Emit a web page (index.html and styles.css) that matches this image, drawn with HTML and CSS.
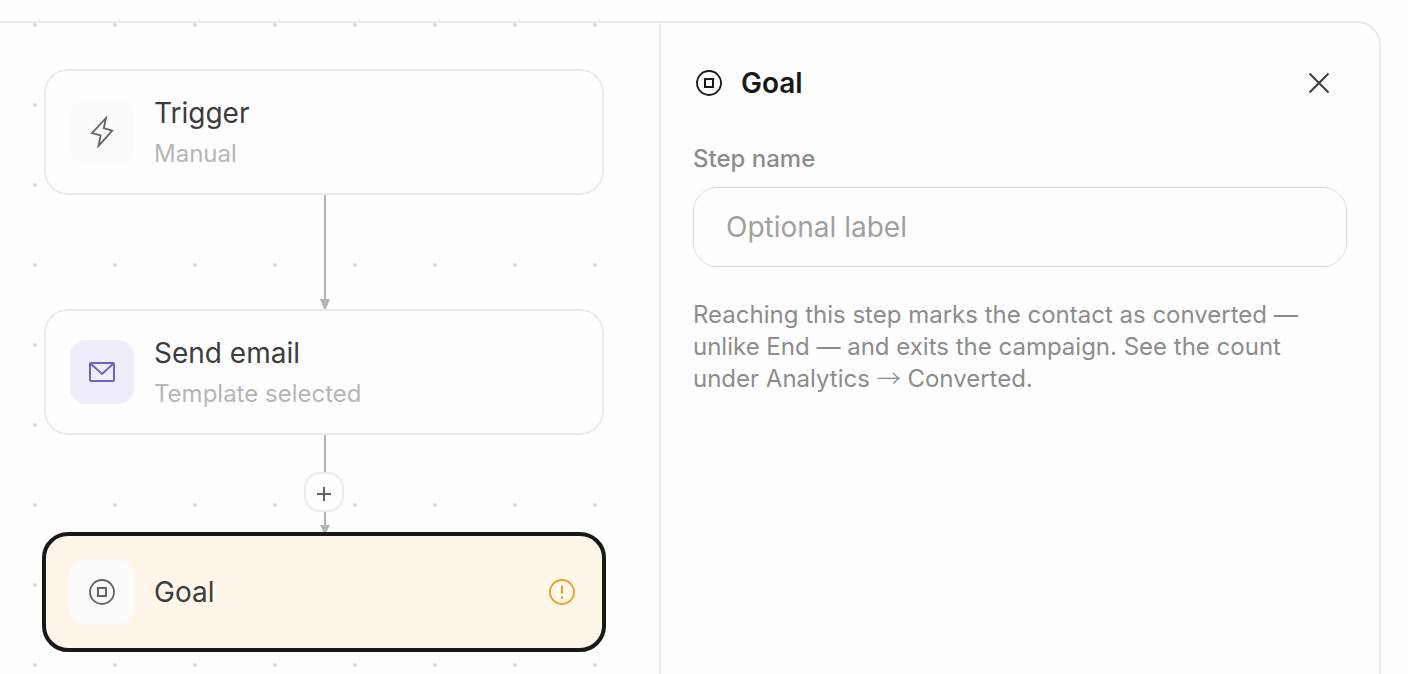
FILE: index.html
```html
<!DOCTYPE html>
<html lang="en">
<head>
<meta charset="utf-8">
<title>Campaign editor</title>
<link rel="stylesheet" href="styles.css">
</head>
<body>
<div class="page">
  <div class="shell">
    <main class="canvas">
      <article class="node">
        <span class="node-icon">
          <svg class="icon" viewBox="0 0 32 32" aria-hidden="true"><path d="M20 2 6 17.100l8.600 2.400L12.500 30 26.200 14.700l-8.400-2.500z"/></svg>
        </span>
        <div class="node-text node-text-double">
          <h3 class="node-title">Trigger</h3>
          <p class="node-note">Manual</p>
        </div>
      </article>

      <div class="connector">
        <svg width="40" height="114" viewBox="0 0 40 114" aria-hidden="true"><path class="wire" d="M21 0v114"/><path class="tip" d="M16 104h10l-4 10h-2z"/></svg>
      </div>

      <article class="node">
        <span class="node-icon node-icon-email">
          <svg class="icon" viewBox="0 0 32 32" aria-hidden="true"><rect class="bold" x="4" y="7" width="24" height="18" rx="1"/><path class="bold" d="M4.500 7.500 16 18 27.500 7.500"/></svg>
        </span>
        <div class="node-text node-text-double">
          <h3 class="node-title">Send email</h3>
          <p class="node-note">Template selected</p>
        </div>
      </article>

      <div class="connector">
        <svg width="40" height="37" viewBox="0 0 40 37" aria-hidden="true"><path class="wire" d="M21 0v37"/></svg>
        <button class="add" type="button" aria-label="Add step">
          <svg width="16" height="16" viewBox="0 0 16 16" aria-hidden="true"><path d="M8 1v14M1 8h14"/></svg>
        </button>
        <svg width="40" height="20" viewBox="0 0 40 20" aria-hidden="true"><path class="wire" d="M21 0v15"/><path class="tip" d="M16 13h10l-5 10z"/></svg>
      </div>

      <article class="node node-selected">
        <span class="node-icon">
          <svg class="icon" viewBox="0 0 32 32" aria-hidden="true"><circle cx="16" cy="16" r="12"/><rect class="bold" x="12" y="12" width="8" height="8"/></svg>
        </span>
        <div class="node-text">
          <h3 class="node-title">Goal</h3>
        </div>
        <svg class="icon warning" viewBox="0 0 32 32" role="img" aria-label="Needs attention"><circle cx="16" cy="16" r="12"/><path class="bold" d="M16 9.500v8M16 20.500v2.500"/></svg>
      </article>
    </main>

    <aside class="panel">
      <header class="panel-head">
        <svg class="icon" viewBox="0 0 32 32" aria-hidden="true"><circle cx="16" cy="16" r="12"/><rect class="bold" x="12" y="12" width="8" height="8"/></svg>
        <h2 class="panel-title">Goal</h2>
        <button class="close" type="button" aria-label="Close">
          <svg class="icon" viewBox="0 0 32 32" aria-hidden="true"><path class="bold" d="m6.500 6.500 19 19M25.500 6.500l-19 19"/></svg>
        </button>
      </header>
      <div class="field">
        <label class="label" for="step-name">Step name</label>
        <input class="input" id="step-name" type="text" placeholder="Optional label">
      </div>
      <p class="help">Reaching this step marks the contact as converted — unlike End — and exits the campaign. See the count under Analytics <span class="arrow">→</span> Converted.</p>
    </aside>
  </div>
</div>
</body>
</html>
```

FILE: styles.css
```css
* {
  box-sizing: border-box;
}

body {
  margin: 0;
  background: #fefefe;
  color: #171918;
  font-family: Inter, "Liberation Sans", sans-serif;
  font-optical-sizing: none;
}

h2, h3, p {
  margin: 0;
}

.page {
  display: flex;
  min-height: 100vh;
  padding: 21px 27px 0 0;
}

.shell {
  display: flex;
  flex: 1;
  border: 2px solid #ebebeb;
  border-width: 2px 2px 0 0;
  border-top-right-radius: 24px;
}

.canvas {
  flex: 1;
  display: flex;
  flex-direction: column;
  padding: 46px 53px 0 42px;
  background-image: radial-gradient(circle at 35px 2px, #dcdcdc 1.5px, transparent 2.5px);
  background-size: 80px 80px;
}

.node {
  display: flex;
  align-items: center;
  gap: 20px;
  min-height: 126px;
  margin: 0 2px;
  padding: 18px 24px;
  border: 2px solid #ebebeb;
  border-radius: 24px;
  background: #fefefe;
}

.node-selected {
  min-height: 120px;
  margin: 0;
  border: 4px solid #171918;
  border-radius: 26px;
  background: #fff7ea;
}

.node-icon {
  display: flex;
  align-items: center;
  justify-content: center;
  width: 64px;
  height: 64px;
  border-radius: 16px;
  background: #fbfbfb;
  color: #626463;
}

.node-icon-email {
  background: #efedfa;
  color: #6e63c8;
}

.node-text {
  flex: 1;
}

.node-text-double {
  display: grid;
  gap: 1px;
  padding-top: 3px;
}

.node-title {
  color: #3c3e3d;
  font-size: 28px;
  font-weight: 400;
  line-height: 40px;
}

.node-note {
  color: #b5b7b6;
  font-size: 24px;
  line-height: 40px;
}

.icon {
  width: 32px;
  height: 32px;
  fill: none;
  stroke: currentColor;
  stroke-width: 1.8;
}

.bold {
  stroke-width: 2;
}

.warning {
  color: #f59b22;
}

.connector {
  display: flex;
  flex-direction: column;
  align-items: center;
}

.wire {
  fill: none;
  stroke: #b4b6b5;
  stroke-width: 2;
}

.tip {
  fill: #b4b6b5;
}

.add {
  display: flex;
  align-items: center;
  justify-content: center;
  width: 40px;
  height: 40px;
  padding: 4px 0 0;
  border: 2px solid #ebebeb;
  border-radius: 16px;
  background: #fefefe;
  color: #626463;
}

.add path {
  stroke: currentColor;
  stroke-width: 2;
}

.panel {
  display: flex;
  flex-direction: column;
  gap: 32px;
  width: 720px;
  padding: 32px;
  border-left: 2px solid #ebebeb;
}

.panel-head {
  display: flex;
  align-items: center;
  gap: 16px;
}

.panel-title {
  flex: 1;
  font-size: 28px;
  font-weight: 600;
  line-height: 40px;
}

.close {
  display: flex;
  align-items: center;
  justify-content: center;
  width: 56px;
  height: 56px;
  padding: 0;
  border: 0;
  background: none;
  color: #3c3e3d;
}

.field {
  display: flex;
  flex-direction: column;
  gap: 12px;
}

.label {
  color: #8b8d8c;
  font-size: 24px;
  font-weight: 500;
  line-height: 32px;
}

.input {
  width: 100%;
  height: 80px;
  padding: 0 32px;
  border: 1px solid #dcdcdc;
  border-radius: 24px;
  background: #fefefe;
  color: #3c3e3d;
  font: inherit;
  font-size: 28px;
}

.input::placeholder {
  color: #9fa1a0;
  opacity: 1;
}

.help {
  color: #8b8d8c;
  font-size: 24px;
  line-height: 32px;
}

.arrow {
  font-family: "Noto Sans CJK JP", sans-serif;
  font-weight: 300;
  line-height: 1;
}
```
